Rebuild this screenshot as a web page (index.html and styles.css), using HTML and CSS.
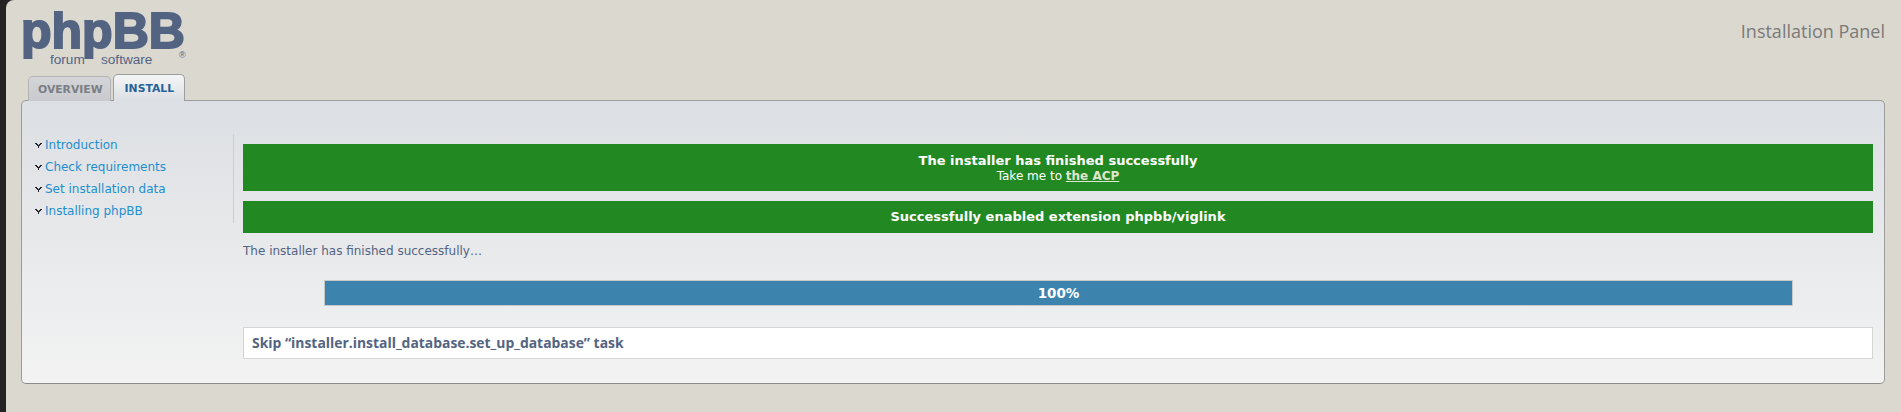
FILE: index.html
```html
<!DOCTYPE html>
<html lang="en">
<head>
  <meta charset="UTF-8" />
  <title>Installation Panel</title>
  <link rel="stylesheet" href="styles.css">
</head>
<body>
  <div class="page">

    <div class="header">
      <div class="logo">
        <span class="logo-name">phpBB</span>
        <span class="logo-forum">forum</span>
        <span class="logo-software">software</span>
        <span class="logo-reg">®</span>
      </div>
      <h1 class="panel-title">Installation Panel</h1>
    </div>

    <div class="tabs">
      <a class="tab">OVERVIEW</a>
      <a class="tab tab-active">INSTALL</a>
    </div>

    <div class="panel">
      <ul class="side-menu">
        <li><svg class="arrow" viewBox="0 0 7 5"><path d="M0 0h2v1h1v1h1V1h1V0h2v1H6v1H5v1H4v2H3V3H2V2H1V1H0z" /></svg><a>Introduction</a></li>
        <li><svg class="arrow" viewBox="0 0 7 5"><path d="M0 0h2v1h1v1h1V1h1V0h2v1H6v1H5v1H4v2H3V3H2V2H1V1H0z" /></svg><a>Check requirements</a></li>
        <li><svg class="arrow" viewBox="0 0 7 5"><path d="M0 0h2v1h1v1h1V1h1V0h2v1H6v1H5v1H4v2H3V3H2V2H1V1H0z" /></svg><a>Set installation data</a></li>
        <li><svg class="arrow" viewBox="0 0 7 5"><path d="M0 0h2v1h1v1h1V1h1V0h2v1H6v1H5v1H4v2H3V3H2V2H1V1H0z" /></svg><a>Installing phpBB</a></li>
      </ul>

      <div class="main">
        <div class="notice notice-big">
          <strong>The installer has finished successfully</strong>
          <p>Take me to <a>the ACP</a></p>
        </div>
        <div class="notice">
          <strong>Successfully enabled extension phpbb/viglink</strong>
        </div>
        <p class="status">The installer has finished successfully…</p>
        <div class="progress">100%</div>
        <div class="log">Skip “installer.install_database.set_up_database” task</div>
      </div>
    </div>

  </div>
</body>
</html>
```

FILE: styles.css
```css
body {
  margin: 0;
  background-color: #232323;
  font-family: "DejaVu Sans", Verdana, sans-serif;
  font-size: 12px;
  color: #536482;
}

.page {
  height: 412px;
  margin-left: 6px;
  padding: 0 16px 0 15px;
  box-sizing: border-box;
  background-color: #dbd8d0;
  border-top-left-radius: 8px;
  overflow: hidden;
}

.header {
  display: flex;
  justify-content: space-between;
  height: 74px;
}

.logo {
  position: relative;
  width: 170px;
  height: 74px;
  color: #536482;
}

.logo-name {
  position: absolute;
  left: 0;
  top: 11px;
  font-family: "Liberation Sans", Arial, sans-serif;
  font-weight: bold;
  font-size: 50px;
  line-height: 40px;
  -webkit-text-stroke: 2px #536482;
}

.logo-forum,
.logo-software {
  position: absolute;
  top: 53px;
  font-family: "Liberation Sans", Arial, sans-serif;
  font-size: 13.6px;
  line-height: 13px;
}

.logo-forum {
  left: 29px;
}

.logo-software {
  left: 80px;
}

.logo-reg {
  position: absolute;
  left: 158px;
  top: 50px;
  font-family: "Liberation Sans", Arial, sans-serif;
  font-size: 9px;
  line-height: 10px;
}

.panel-title {
  margin: 21px 0 0 0;
  font-family: "Open Sans", sans-serif;
  font-weight: normal;
  font-size: 18px;
  line-height: 20px;
  color: #7a7a7a;
}

.tabs {
  display: flex;
  align-items: flex-end;
  gap: 2px;
  height: 27px;
  margin: 0 0 -1px 7px;
  position: relative;
}

.tab {
  height: 25px;
  padding: 0 7px 0 9px;
  box-sizing: border-box;
  line-height: 25px;
  font-size: 10.8px;
  font-weight: bold;
  color: #7a7e85;
  background: linear-gradient(#d4d5d8, #c9cacd);
  border: 1px solid #b4b4b4;
  border-bottom: none;
  border-radius: 5px 5px 0 0;
}

.tab-active {
  height: 27px;
  padding: 0 10px 0 11px;
  line-height: 27px;
  color: #28629c;
  background: linear-gradient(#f4f5f6, #dcdfe3);
  border-color: #9e9e9e;
}

.panel {
  display: flex;
  align-items: flex-start;
  height: 284px;
  box-sizing: border-box;
  background: linear-gradient(#dcdfe3, #f3f3f3);
  border: 1px solid #9c9c9c;
  border-bottom-color: #8c8c8c;
  border-radius: 5px;
}

.side-menu {
  width: 212px;
  height: 89px;
  margin: 33px 0 0 0;
  padding: 0 0 0 13px;
  box-sizing: border-box;
  list-style: none;
  border-right: 1px solid #ccced1;
}

.side-menu li {
  display: flex;
  align-items: center;
  gap: 3px;
  height: 22px;
}

.side-menu a {
  color: #1e8fce;
}

.arrow {
  width: 7px;
  height: 5px;
  fill: #23252a;
}

.main {
  flex: 1;
  padding: 43px 11px 0 9px;
}

.notice {
  padding: 8px 0;
  background-color: #228822;
  color: #ffffff;
  text-align: center;
  font-size: 13px;
  line-height: 16px;
  margin-bottom: 10px;
}

.notice p {
  margin: 0;
  font-size: 12px;
  line-height: 15px;
}

.notice a {
  font-weight: bold;
  color: #dfe6cf;
  text-decoration: underline;
}

.notice-big {
  padding: 9px 0 7px 0;
}

.status {
  margin: 0 0 21px 0;
  line-height: 16px;
  color: #536482;
}

.progress {
  height: 26px;
  margin: 0 80px 0 81px;
  box-sizing: border-box;
  background-color: #3c83ad;
  border: 1px solid #c8c8c8;
  color: #ffffff;
  text-align: center;
  font-weight: bold;
  font-size: 13.5px;
  line-height: 24px;
}

.log {
  height: 32px;
  margin-top: 21px;
  padding-left: 8px;
  box-sizing: border-box;
  background-color: #ffffff;
  border: 1px solid #d5d5d5;
  font-family: "Open Sans", sans-serif;
  font-weight: bold;
  font-size: 13.9px;
  line-height: 30px;
  color: #536482;
}
```
